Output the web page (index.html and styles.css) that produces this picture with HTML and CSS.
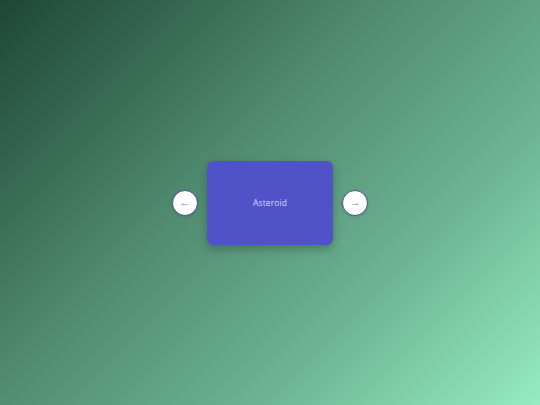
FILE: index.html
```html
<!DOCTYPE html>
<html>
<head>
<meta charset="utf-8">
<link rel="stylesheet" href="styles.css">
</head>
<body>
<main class="stage">
  <div class="carousel">
    <button class="nav">&larr;</button>
    <div class="card"><span class="label">Asteroid</span></div>
    <button class="nav">&rarr;</button>
  </div>
</main>
</body>
</html>
```
FILE: styles.css
```css
html, body {
  margin: 0;
  padding: 0;
  width: 540px;
  height: 405px;
  overflow: hidden;
}
.stage {
  width: 540px;
  height: 405px;
  background: linear-gradient(135deg, #1e4638 0%, #4f8a6e 40%, #6db393 70%, #94ecc3 100%);
  display: flex;
  align-items: center;
  justify-content: center;
  font-family: "Open Sans", "DejaVu Sans", sans-serif;
}
.carousel {
  display: flex;
  align-items: center;
  gap: 9px;
}
.nav {
  width: 26px;
  height: 26px;
  border-radius: 50%;
  border: 1px solid #4a4f9a;
  background: #ffffff;
  color: #7c80c4;
  font-size: 11px;
  line-height: 1;
  padding: 0;
  display: flex;
  align-items: center;
  justify-content: center;
  box-shadow: 0 1px 3px rgba(0,0,0,0.15);
}
.card {
  width: 126px;
  height: 84px;
  border-radius: 6px;
  background: #5052c8;
  display: flex;
  align-items: center;
  justify-content: center;
  box-shadow: 0 4px 10px rgba(0,0,0,0.25);
}
.label {
  color: #d8daf4;
  font-size: 8.5px;
  letter-spacing: 0.1px;
}
```
